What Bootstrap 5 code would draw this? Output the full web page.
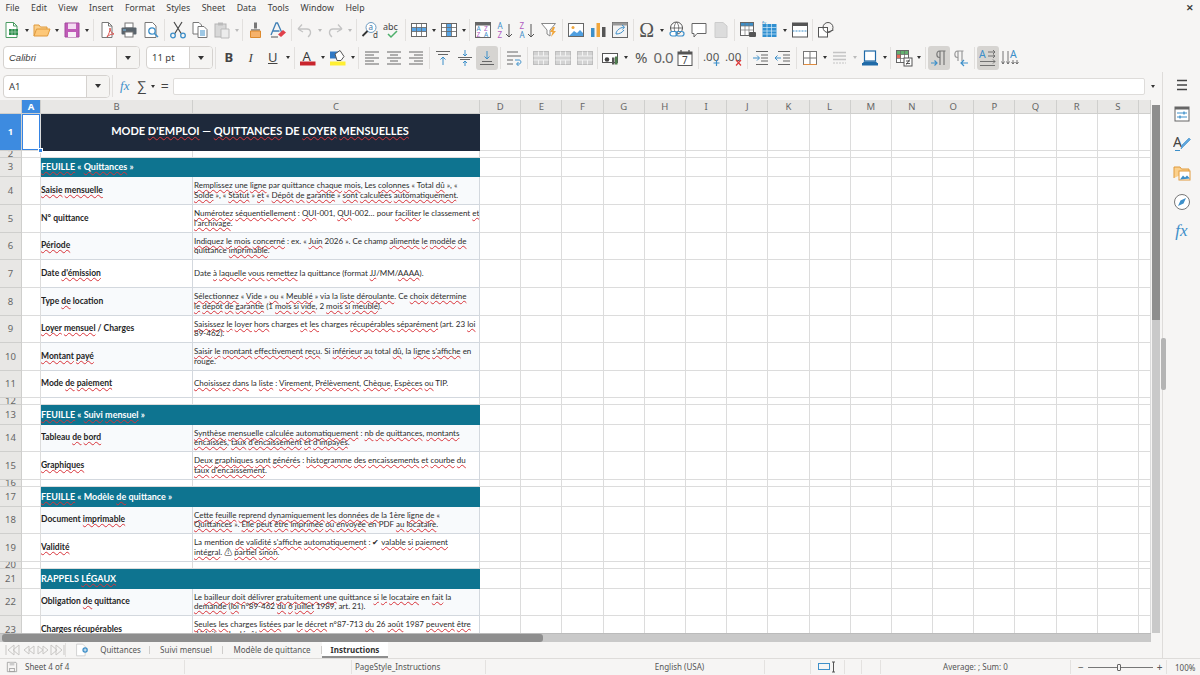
<!DOCTYPE html>
<html lang="fr">
<head>
    <meta charset="UTF-8">
    <title>Instructions - LibreOffice Calc</title>
    <link href="https://cdn.jsdelivr.net/npm/bootstrap@5.3.0/dist/css/bootstrap.min.css" rel="stylesheet">
    <style>
        html, body { height: 100%; }
        body { background: #f6f5f4; color: #3d3d3d; font: 10px "Noto Sans", sans-serif; overflow: hidden; }
        .menu-bar { height: 17px; padding-left: 5.5px; gap: 11.5px; line-height: 17px; font-size: 8.8px; position: relative; }
        .win-close { position: absolute; right: 6px; top: 0; font-weight: 700; }
        .tool-row { padding-left: 1px; padding-bottom: 2px; align-items: center; }
        .row-a { height: 28px; }
        .row-b { height: 27px; }
        .tbtn { width: 22px; height: 24px; flex: none; display: flex; align-items: center; justify-content: center; color: #444; font-size: 13px; line-height: 1; }
        .tbtn.on { background: #d6d4d1; border-radius: 3px; }
        .tbtn svg, .side-ico svg { width: 18px; height: 18px; flex: none; }
        .glyph-omega { font: 20px "Liberation Serif", serif; color: #555; }
        .glyph-pct { font-size: 15px; color: #555; }
        .glyph-num { font-size: 15px; color: #666; letter-spacing: -.5px; }
        .glyph-ital { font-family: "Liberation Serif", serif; }
        .glyph-fx { width: 20px; color: #3d8fc9; font: italic 13px "Liberation Serif", serif; }
        .glyph-sum { width: 14px; font-size: 14px; }
        .glyph-eq { width: 16px; font-size: 14px; }
        .drop { width: 8px; height: 24px; flex: none; display: flex; align-items: center; justify-content: center; }
        .drop::after { content: ""; border: 2.5px solid transparent; border-top: 3px solid #333; border-bottom: 0; }
        .drop.off::after { border-top-color: #bbb; }
        .sep { width: 4.75px; height: 22px; flex: none; display: flex; justify-content: center; }
        .sep::after { content: ""; width: 1px; background: #e2e0de; }
        .combo { height: 23px; display: flex; flex: none; background: #fff; border: 1px solid #d5d2cf; border-radius: 4px; overflow: hidden; font-size: 9.5px; }
        .combo-val { flex: 1; padding: 0 5px; line-height: 21px; }
        .combo-btn { width: 23px; background: #f5f4f2; border-left: 1px solid #d5d2cf; display: flex; align-items: center; justify-content: center; }
        .combo-btn::after { content: ""; border: 3.5px solid transparent; border-top: 4px solid #333; border-bottom: 0; }
        .font-box { width: 137px; margin-left: 2px; font-style: italic; font-family: "Liberation Sans", sans-serif; }
        .size-box { width: 67px; margin-left: 6px; }
        .name-box { width: 107px; margin-left: 3px; }
        .work-wrap { min-height: 0; flex: 1 1 0; }
        .left-col { min-width: 0; }
        .form-bar { height: 28px; flex: none; align-items: center; }
        .form-input { height: 17px; width: 972px; flex: none; background: #fff; border: 1px solid #dedcda; border-radius: 2px; }
        .sheet-wrap { min-height: 0; flex: 1 1 0; }
        .sheet-area { background: #fff; }
        .sheet-tbl { table-layout: fixed; border-collapse: separate; border-spacing: 0; width: 1151px; font: 8px/9.3px Lato, "Noto Sans CJK SC", sans-serif; color: #2b2b2b; }
        .sheet-tbl col:nth-child(1) { width: 22px; }
        .sheet-tbl col:nth-child(2) { width: 19px; }
        .sheet-tbl col:nth-child(3) { width: 152px; }
        .sheet-tbl col:nth-child(4) { width: 287px; }
        .sheet-tbl col.col-std { width: 41.2px; }
        .sheet-tbl td, .sheet-tbl th { border-right: 1px solid #dcdcdc; border-bottom: 1px solid #dcdcdc; padding: 0; overflow: hidden; white-space: nowrap; }
        .sheet-tbl th { background: #e8e7e5; color: #666; font: 9.5px/6px "Noto Sans", sans-serif; text-align: center; border-color: #cfcfcd; }
        .sheet-tbl th.hot { background: #3d8be0; color: #fff; font-weight: 700; }
        .col-hdr { height: 14px; }
        .sheet-tbl .lab { font-weight: 700; font-size: 8.5px; color: #1f1f1f; border-color: #d3d8de; }
        .sheet-tbl .txt { padding-left: 1px; border-color: #d3d8de; }
        .sheet-tbl .soft { background: #f8fafc; }
        .sheet-tbl .ttl { background: #1e293b; color: #fff; font-weight: 700; font-size: 11px; text-align: center; border-color: #1e293b; padding-bottom: 2px; }
        .sheet-tbl .sec { background: #0e7490; color: #fff; font-weight: 700; font-size: 9px; border-color: #0e7490; }
        .sheet-tbl .cur { position: relative; box-shadow: inset 0 0 0 1px #3584e4; overflow: visible; }
        .cur-dot { position: absolute; right: -3px; bottom: -3px; width: 5px; height: 5px; background: #3584e4; border: 1px solid #fff; }
        .sp { text-decoration: underline wavy #d8333a; text-decoration-thickness: 1px; text-underline-offset: 1px; text-decoration-skip-ink: none; }
        .vscroll { width: 11px; flex: none; background: #f6f5f4; padding: 5px 2px 0 1px; }
        .vscroll-in { height: 100%; background: #c9c9c9; }
        .vthumb { height: 215px; background: #8e8e8e; }
        .hscroll { height: 9px; flex: none; background: #c9c9c9; margin-right: 11px; border-top: 1px solid #bbb; }
        .hthumb { width: 541px; height: 100%; margin-left: 2px; background: #8e8e8e; border-radius: 3px; }
        .tab-row { height: 16px; flex: none; align-items: center; color: #555; font-size: 8px; }
        .tab-nav { width: 66px; padding-left: 5px; border-right: 1px solid #e2e0de; height: 14px; flex: none; }
        .tab-add { width: 20px; height: 16px; margin-left: 6px; }
        .tab-add svg { width: 14px; height: 14px; }
        .sheet-tab { height: 16px; line-height: 15px; flex: none; text-align: center; }
        .tab-1 { width: 57px; }
        .tab-2 { width: 72px; }
        .tab-3 { width: 98px; }
        .tab-line { width: 1px; height: 8px; background: #cfcdcb; flex: none; }
        .tab-on { width: 66px; font-weight: 700; color: #333; background: #fff; border-bottom: 2px solid #8f8f8f; }
        .side-bar { width: 38px; flex: none; border-left: 1px solid #dedcda; position: relative; }
        .side-ico { height: 29.2px; display: flex; align-items: center; justify-content: center; }
        .side-ico:first-child { margin-top: -1.5px; }
        .side-fx { color: #3d8fc9; font: italic 17px "Liberation Serif", serif; }
        .side-grip { position: absolute; left: -2px; top: 266px; width: 5px; height: 52px; background: #b4b4b4; border-radius: 2px; }
        .status-bar { height: 17px; flex: none; border-top: 1px solid #dedcda; align-items: center; font-size: 8px; color: #555; }
        .stat-cell { height: 14px; line-height: 14px; flex: none; border-right: 1px solid #e4e2e0; overflow: hidden; white-space: nowrap; }
        .stat-save { width: 185px; padding-left: 3px; }
        .stat-save svg { width: 18px; height: 14px; }
        .stat-gap { width: 167px; }
        .stat-page { width: 134px; padding-left: 3px; }
        .stat-lang { width: 279px; padding-left: 109px; }
        .stat-w46 { width: 46px; }
        .stat-sel { width: 34px; padding-left: 7px; }
        .stat-w17 { width: 17px; }
        .stat-w19 { width: 19px; }
        .stat-sum { width: 190px; }
        .stat-zoom { width: 96px; padding-left: 7px; font-size: 10px; }
        .zoom-track { width: 65px; height: 1px; background: #777; position: relative; }
        .zoom-knob { position: absolute; left: 29px; top: -3px; width: 4px; height: 7px; border: 1px solid #666; background: #f6f5f4; border-radius: 1px; }
    </style>
</head>
<body>
<svg width="0" height="0" class="position-absolute">
    <defs>
        <symbol id="i-new" viewBox="0 0 18 18"><path d="M3 1.5h7.5L14 5v11.5H3z" fill="#fff" stroke="#4b9b63"/><path d="M10.5 1.5V5H14" fill="none" stroke="#4b9b63"/><rect x="6" y="8" width="9" height="6" fill="#2f8f4e"/><path d="M6 11h9M9 8v6M12 8v6" stroke="#bfe3cb" stroke-width=".6"/></symbol>
        <symbol id="i-open" viewBox="0 0 18 18"><path d="M1 15V4h5l1.5 2H14v2" fill="#fbd08c" stroke="#e09a3d"/><path d="M1 15l2.5-7H17l-2.500 7z" fill="#fdc879" stroke="#e09a3d"/></symbol>
        <symbol id="i-save" viewBox="0 0 18 18"><path d="M2 2h14v14H2z" fill="#c05bb8" stroke="#a44a9e"/><rect x="5" y="2.500" width="8" height="5.500" fill="#f4dcf2"/><rect x="5" y="11" width="8" height="5" fill="#f8eef7"/></symbol>
        <symbol id="i-pdf" viewBox="0 0 18 18"><path d="M4 1.500h6.500L14 5v11.500H4z" fill="#fff" stroke="#777"/><path d="M10.500 1.500V5H14" fill="none" stroke="#777"/><path d="M9 16c2-3 3-6 3-9 0 3 1.500 5 4 6-3 0-5 1-7 3z" fill="none" stroke="#d9534f"/></symbol>
        <symbol id="i-print" viewBox="0 0 18 18"><rect x="5" y="2" width="8" height="5" fill="#fff" stroke="#777"/><rect x="1.500" y="6.500" width="15" height="7" rx="1" fill="#59636b"/><rect x="5" y="11" width="8" height="5" fill="#fff" stroke="#777"/><path d="M3 9h3" stroke="#7cc1ee"/></symbol>
        <symbol id="i-prev" viewBox="0 0 18 18"><path d="M3 1.500h7.500L14 5v11.500H3z" fill="#fff" stroke="#777"/><circle cx="10" cy="10" r="3.200" fill="#fff" stroke="#3d8fc9" stroke-width="1.300"/><path d="M12.500 12.500l3.500 3.500" stroke="#3d8fc9" stroke-width="1.500"/></symbol>
        <symbol id="i-cut" viewBox="0 0 18 18"><path d="M5 1l7.500 12M13 1L5.500 13" stroke="#4a4a4a" stroke-width="1.200"/><circle cx="4" cy="14.500" r="2.300" fill="none" stroke="#3d8fc9" stroke-width="1.300"/><circle cx="14" cy="14.500" r="2.300" fill="none" stroke="#3d8fc9" stroke-width="1.300"/></symbol>
        <symbol id="i-copy" viewBox="0 0 18 18"><path d="M2 1.500h6l2.500 2.500v9H2z" fill="#fff" stroke="#777"/><path d="M7 5.500h6l3 3v8H7z" fill="#fff" stroke="#777"/><path d="M9 10h5M9 12h5M9 14h5" stroke="#3d8fc9"/></symbol>
        <symbol id="i-paste" viewBox="0 0 18 18"><rect x="2" y="3" width="11" height="13" fill="#d8d8d8" stroke="#b5b5b5"/><rect x="5" y="1.500" width="5" height="3" fill="#bbb"/><path d="M8 8h8v9H8z" fill="#ececec" stroke="#bbb"/></symbol>
        <symbol id="i-clone" viewBox="0 0 18 18"><path d="M7 1.500h3v6H7z" fill="#777"/><path d="M4 8h9v2H4z" fill="#9a9a9a"/><path d="M3.500 10h10v6.500h-10z" fill="#f6b26b" stroke="#dd8a2e"/></symbol>
        <symbol id="i-clear" viewBox="0 0 18 18"><path d="M2 14L7 2h1.500L13 12M4 10h6.500" fill="none" stroke="#3f7fb5" stroke-width="1.300"/><path d="M9 13.500l5-4.500 3 2.500-5 4.500z" fill="#e0404a"/><path d="M2 16h7" stroke="#555"/></symbol>
        <symbol id="i-undo" viewBox="0 0 18 18"><path d="M2 8l4-4.500M2 8l5 3M2.500 8H11c4 0 5 5 1 8" fill="none" stroke="#c4c4c4" stroke-width="1.300"/></symbol>
        <symbol id="i-redo" viewBox="0 0 18 18"><path d="M16 8l-4-4.500M16 8l-5 3M15.500 8H7c-4 0-5 5-1 8" fill="none" stroke="#c4c4c4" stroke-width="1.300"/></symbol>
        <symbol id="i-find" viewBox="0 0 18 18"><circle cx="10" cy="6.500" r="5" fill="#fff" stroke="#6d9bc1"/><path d="M6.500 10L1.500 15" stroke="#333" stroke-width="1.800"/><text x="7.500" y="9" font-size="8" fill="#3d78a8" font-family="Noto Sans">a</text><text x="12" y="17" font-size="8" fill="#444" font-family="Noto Sans">d</text></symbol>
        <symbol id="i-spell" viewBox="0 0 18 18"><text x="0" y="9" font-size="9" fill="#444" font-family="Noto Sans">abc</text><path d="M5 13l3 3 6-6" fill="none" stroke="#4caf6a" stroke-width="1.500"/></symbol>
        <symbol id="i-rows" viewBox="0 0 18 18"><rect x="1.500" y="2.500" width="15" height="13" fill="#fff" stroke="#666"/><rect x="2" y="6.500" width="14" height="4" fill="#58a5e6"/><path d="M1.500 6.500h15M1.500 10.500h15M6.500 2.500v13M11.500 2.500v13" stroke="#666" stroke-width=".8"/></symbol>
        <symbol id="i-cols" viewBox="0 0 18 18"><rect x="1.500" y="2.500" width="15" height="13" fill="#fff" stroke="#666"/><rect x="6.500" y="3" width="5" height="12" fill="#58a5e6"/><path d="M1.500 6.500h15M1.500 10.500h15M6.500 2.500v13M11.500 2.500v13" stroke="#666" stroke-width=".8"/></symbol>
        <symbol id="i-sort" viewBox="0 0 18 18"><rect x="1.500" y="1.500" width="15" height="15" fill="#fff" stroke="#666"/><rect x="1.500" y="1.500" width="15" height="3" fill="#666"/><text x="2.500" y="10" font-size="6.500" fill="#3d8fc9" font-family="Noto Sans">A</text><text x="2.500" y="16" font-size="6.500" fill="#b05cc0" font-family="Noto Sans">Z</text><text x="10" y="10" font-size="6.500" fill="#b05cc0" font-family="Noto Sans">Z</text><text x="10" y="16" font-size="6.500" fill="#3d8fc9" font-family="Noto Sans">A</text></symbol>
        <symbol id="i-asc" viewBox="0 0 18 18"><text x="1.500" y="8" font-size="8" fill="#3d8fc9" font-family="Noto Sans">A</text><text x="1.500" y="16.500" font-size="8" fill="#b05cc0" font-family="Noto Sans">Z</text><path d="M13 3v13M10 13l3 3 3-3" fill="none" stroke="#555"/></symbol>
        <symbol id="i-desc" viewBox="0 0 18 18"><text x="1.500" y="8" font-size="8" fill="#b05cc0" font-family="Noto Sans">Z</text><text x="1.500" y="16.500" font-size="8" fill="#3d8fc9" font-family="Noto Sans">A</text><path d="M13 3v13M10 13l3 3 3-3" fill="none" stroke="#555"/></symbol>
        <symbol id="i-filter" viewBox="0 0 18 18"><path d="M1.500 2.500h14L10 9v6L7 13V9z" fill="#fff" stroke="#888"/><path d="M13 6l-3 5h2.500L11 16l5-6h-2.500L15 6z" fill="#f0a63c"/></symbol>
        <symbol id="i-image" viewBox="0 0 18 18"><rect x="1.500" y="2.500" width="15" height="13" fill="#fff" stroke="#666"/><circle cx="6" cy="6.500" r="1.500" fill="#f0a63c"/><path d="M2 15l5-5 3 2 3-3 3 3v3z" fill="#4f9fe0"/></symbol>
        <symbol id="i-chart" viewBox="0 0 18 18"><rect x="2" y="7" width="3.500" height="9" fill="#3d8fc9"/><rect x="7.500" y="2" width="3.500" height="14" fill="#f0a63c"/><rect x="13" y="6" width="3.500" height="10" fill="#555"/></symbol>
        <symbol id="i-pivot" viewBox="0 0 18 18"><rect x="1.500" y="1.500" width="15" height="15" fill="#f3f3f3" stroke="#666"/><rect x="1.500" y="1.500" width="15" height="3" fill="#999"/><path d="M5 13c0-3 3-6 8-7M11 4l2.500 2-2 2.500M5 13c3 0 6-1 8-4" fill="none" stroke="#3d8fc9"/></symbol>
        <symbol id="i-link" viewBox="0 0 18 18"><circle cx="8.500" cy="7" r="6" fill="#fff" stroke="#555"/><path d="M2.500 7h12M8.500 1c-3 3-3 9 0 12M8.500 1c3 3 3 9 0 12" fill="none" stroke="#555" stroke-width=".8"/><rect x="2" y="10.500" width="7" height="4.500" rx="2.200" fill="#fff" stroke="#3d8fc9" stroke-width="1.200"/><rect x="8" y="10.500" width="8" height="4.500" rx="2.200" fill="none" stroke="#3d8fc9" stroke-width="1.200"/></symbol>
        <symbol id="i-note" viewBox="0 0 18 18"><path d="M2 2.500h14v10H7l-3 3.500v-3.500H2z" fill="#fff" stroke="#666"/></symbol>
        <symbol id="i-head" viewBox="0 0 18 18"><path d="M3 1.500h8L15 5v11.500H3z" fill="#dcdcdc" stroke="#ccc"/></symbol>
        <symbol id="i-add" viewBox="0 0 18 18"><path d="M2 1.500h8L13 4.500v12H2z" fill="#fff" stroke="#c9c9c9"/><circle cx="13" cy="9" r="3.500" fill="#3d8fc9"/><path d="M11 9h4M13 7v4" stroke="#fff"/></symbol>
        <symbol id="i-range" viewBox="0 0 18 18"><rect x="1.500" y="1.500" width="13" height="13" fill="#fff" stroke="#666"/><rect x="2" y="2" width="12" height="3" fill="#3d8fc9"/><path d="M1.500 5h13M1.500 9h13M6 2v12M10 2v12" stroke="#777" stroke-width=".7"/><rect x="10" y="11" width="7" height="5" rx="1" fill="#555"/></symbol>
        <symbol id="i-tbl" viewBox="0 0 18 18"><rect x="1.500" y="3" width="14" height="13" fill="#2f8fd0"/><path d="M1.500 6.500h14M1.500 10h14M1.500 13h14M6 3v13M10.500 3v13" stroke="#d7ecfa" stroke-width=".7"/><text x="1" y="3.500" font-size="5" fill="#3d8fc9" font-family="Noto Sans">fx</text></symbol>
        <symbol id="i-win" viewBox="0 0 18 18"><rect x="1.500" y="2" width="15" height="14" fill="#fff" stroke="#555"/><rect x="1.500" y="2" width="15" height="3" fill="#555"/><path d="M1.500 10h15" stroke="#3d8fc9" stroke-dasharray="2 1"/></symbol>
        <symbol id="i-shape" viewBox="0 0 18 18"><rect x="1.500" y="6.500" width="9" height="9.500" fill="#fff" stroke="#555"/><circle cx="11" cy="6.500" r="5" fill="none" stroke="#555"/><path d="M11 11l5.500-2" stroke="#555"/></symbol>
        <symbol id="i-colA" viewBox="0 0 18 18"><text x="3.500" y="11.500" font-size="13" fill="#3a3a3a" font-family="Noto Sans">A</text><rect x="1" y="12.500" width="15.500" height="4" fill="#c9252d"/></symbol>
        <symbol id="i-mark" viewBox="0 0 18 18"><rect x="1" y="2.500" width="8" height="7" fill="#2f78c4"/><path d="M6 5l5-3.500 4 6-3 4H8z" fill="#fff" stroke="#555"/><rect x="1" y="12.500" width="15.500" height="4" fill="#ffef33"/></symbol>
        <symbol id="i-al" viewBox="0 0 18 18"><path d="M2 3h14M2 6h9M2 9h14M2 12h9M2 15h14" stroke="#666"/></symbol>
        <symbol id="i-ac" viewBox="0 0 18 18"><path d="M2 3h14M5 6h8M2 9h14M5 12h8M2 15h14" stroke="#666"/></symbol>
        <symbol id="i-ar" viewBox="0 0 18 18"><path d="M2 3h14M7 6h9M2 9h14M7 12h9M2 15h14" stroke="#666"/></symbol>
        <symbol id="i-vt" viewBox="0 0 18 18"><path d="M2 2.500h14M4 5.500h10" stroke="#666"/><path d="M9 16V8M6.500 10.500L9 8l2.500 2.500" fill="none" stroke="#3d8fc9"/></symbol>
        <symbol id="i-vc" viewBox="0 0 18 18"><path d="M2 8.500h14M4 10.500h10" stroke="#666"/><path d="M9 1v6M7 5l2 2 2-2M9 17v-5M7 14l2-2 2 2" fill="none" stroke="#3d8fc9"/></symbol>
        <symbol id="i-vb" viewBox="0 0 18 18"><path d="M4 12.500h10M2 15.500h14" stroke="#666"/><path d="M9 2v8M6.500 7.500L9 10l2.500-2.500" fill="none" stroke="#3d8fc9"/></symbol>
        <symbol id="i-wrap" viewBox="0 0 18 18"><path d="M2 3h11M2 7h14M2 11h6M2 15h6" stroke="#666"/><path d="M10 11h4c2.500 0 2.500 4 0 4h-2M13.500 13l-2 2 2 2" fill="none" stroke="#3d8fc9"/></symbol>
        <symbol id="i-merge" viewBox="0 0 18 18"><rect x="1.500" y="2.500" width="15" height="13" fill="#d3d3d3" stroke="#bdbdbd"/><path d="M1.500 7h15M1.500 11h15M6.500 2.500V7M11.500 2.500V7M6.500 11v4.500M11.500 11v4.500" stroke="#f2f2f2"/></symbol>
        <symbol id="i-cur" viewBox="0 0 18 18"><rect x=".5" y="4.500" width="15" height="9" fill="#fff" stroke="#555"/><circle cx="5" cy="10.500" r="2.300" fill="#444"/><rect x="10" y="8.500" width="2.500" height="7" fill="#555"/><rect x="13" y="7.500" width="2.500" height="8" fill="#4f7f4f"/></symbol>
        <symbol id="i-date" viewBox="0 0 18 18"><rect x="2" y="3" width="14" height="13.500" fill="#fff" stroke="#555"/><rect x="2" y="3" width="14" height="2.500" fill="#555"/><path d="M5 1v3M13 1v3" stroke="#555" stroke-width="1.300"/><text x="6" y="14.500" font-size="10" fill="#444" font-family="Noto Sans">7</text></symbol>
        <symbol id="i-decp" viewBox="0 0 18 18"><text x="0" y="12" font-size="11.500" fill="#555" font-family="Noto Sans">.00</text><path d="M13.500 11v6M10.500 14h6" stroke="#3d8fc9" stroke-width="1.200"/></symbol>
        <symbol id="i-decm" viewBox="0 0 18 18"><text x="0" y="12" font-size="11.500" fill="#555" font-family="Noto Sans">.00</text><path d="M11 11l5 5.500M16 11l-5 5.500" stroke="#dd3b3b" stroke-width="1.200"/></symbol>
        <symbol id="i-ind" viewBox="0 0 18 18"><path d="M4 2.500h12M9 6h7M9 9h7M9 12h7M4 15.500h12" stroke="#666"/><path d="M1 9h6M5 6.500L7.500 9 5 11.500" fill="none" stroke="#3d8fc9"/></symbol>
        <symbol id="i-out" viewBox="0 0 18 18"><path d="M4 2.500h12M9 6h7M9 9h7M9 12h7M4 15.500h12" stroke="#666"/><path d="M7 9H1M3.500 6.500L1 9l2.500 2.500" fill="none" stroke="#3d8fc9"/></symbol>
        <symbol id="i-bord" viewBox="0 0 18 18"><rect x="2.500" y="2.500" width="13" height="13" fill="#fff" stroke="#777"/><path d="M9 2.500v13M2.500 9h13" stroke="#777"/><path d="M2.500 15.500h13" stroke="#e08b3d"/></symbol>
        <symbol id="i-bstyle" viewBox="0 0 18 18"><path d="M2 3.500h13M2 7h13M2 10.500h13" stroke="#c4c4c4" stroke-width="1.300"/><path d="M2 14h13" stroke="#c4c4c4" stroke-dasharray="2 1"/></symbol>
        <symbol id="i-bcol" viewBox="0 0 18 18"><rect x="3.500" y="2" width="11" height="10" fill="#fff" stroke="#1f6aa8" stroke-width="1.200"/><path d="M1 15l2-2.500h12l2 2.500z" fill="#1f6aa8"/><rect x="1" y="14" width="16" height="2.500" fill="#1f6aa8"/></symbol>
        <symbol id="i-cond" viewBox="0 0 18 18"><rect x="1.500" y="1.500" width="12" height="12" fill="#fff" stroke="#666"/><rect x="2" y="2" width="11" height="3.500" fill="#63b06f"/><rect x="2" y="5.500" width="4" height="3.500" fill="#e56b5b"/><path d="M1.500 5.500h12M1.500 9.500h12M5.500 2v11M9.500 2v11" stroke="#666" stroke-width=".7"/><rect x="9" y="9" width="8" height="8" fill="#fff" stroke="#555"/><path d="M11 12h4M11 14.500h4M14.500 10.500l-3 5" stroke="#333" stroke-width=".8"/></symbol>
        <symbol id="i-ltr" viewBox="0 0 18 18"><path d="M10 16V2M14 16V2M15.500 2H9.500C6 2 6 8.500 9.500 8.500H10" fill="none" stroke="#777" stroke-width="1.200"/><path d="M1 14h6M4.500 11.500L7 14l-2.500 2.500" fill="none" stroke="#3d8fc9" stroke-width="1.200"/></symbol>
        <symbol id="i-rtl" viewBox="0 0 18 18"><path d="M6 12V2M10 12V2M11.500 2H5.500C2 2 2 8.500 5.500 8.500H6" fill="none" stroke="#999" stroke-width="1.200"/><path d="M9 14h7M12 11l-3 3 3 3" fill="none" stroke="#3d8fc9" stroke-width="1.200"/></symbol>
        <symbol id="i-hz" viewBox="0 0 18 18"><text x="0" y="9" font-size="10.500" fill="#3d8fc9" font-family="Noto Sans">A</text><path d="M9 3h7M14 1l2 2-2 2M9 7h7M14 5.500L16 7l-2 2M1 12.500h15M14 10.500l2 2-2 2M1 16.500h15" fill="none" stroke="#666" stroke-width=".9"/></symbol>
        <symbol id="i-vt2" viewBox="0 0 18 18"><text x="9" y="9" font-size="10.500" fill="#3d8fc9" font-family="Noto Sans">A</text><path d="M2 2v13M.5 12.500L2 15l1.500-2.500M7 2v13M5.500 12.500L7 15l1.500-2.500M12 11v4M10.500 13L12 15l1.500-2M16 11v4M14.500 13L16 15l1.500-2" fill="none" stroke="#666" stroke-width=".9"/></symbol>
        <symbol id="i-disk" viewBox="0 0 18 18"><path d="M3 3h11l1 1v11H3z" fill="none" stroke="#999"/><rect x="6" y="3" width="6" height="4" fill="#ccc"/><rect x="6" y="11" width="6" height="4" fill="none" stroke="#999"/></symbol>
        <symbol id="i-props" viewBox="0 0 18 18"><rect x="2" y="2" width="14" height="14" fill="#fff" stroke="#666"/><rect x="2" y="2" width="14" height="2.500" fill="#666"/><path d="M4 8h10M4 12h10" stroke="#3d8fc9"/><path d="M11 6.500v3M7 10.500v3" stroke="#3d8fc9" stroke-width="1.300"/></symbol>
        <symbol id="i-style" viewBox="0 0 18 18"><text x="0" y="13" font-size="14" fill="#444" font-family="Noto Sans">A</text><path d="M8 15l1-4 7-7 1.500 1.500-7 7z" fill="#5fa6de" stroke="#3d8fc9" stroke-width=".6"/><path d="M2 16.500h5" stroke="#3d8fc9"/></symbol>
        <symbol id="i-gall" viewBox="0 0 18 18"><path d="M1 14V3h6l1.500 2H16v2" fill="#fbd08c" stroke="#e09a3d"/><rect x="6" y="7" width="11" height="9" fill="#fff" stroke="#e09a3d"/><path d="M7 15.500l3-4 2 2 2-2 3 3z" fill="#3d8fc9"/></symbol>
        <symbol id="i-nav" viewBox="0 0 18 18"><circle cx="9" cy="9" r="7.500" fill="#fff" stroke="#777"/><path d="M13 5l-2.500 5.500L5 13l2.500-5.500z" fill="#3d8fc9"/></symbol>
    </defs>
</svg>

<div class="d-flex flex-column vh-100">
    <div class="menu-bar d-flex flex-shrink-0">
        <span>File</span><span>Edit</span><span>View</span><span>Insert</span><span>Format</span><span>Styles</span><span>Sheet</span><span>Data</span><span>Tools</span><span>Window</span><span>Help</span>
        <span class="win-close">✕</span>
    </div>

    <div class="tool-row row-a d-flex flex-shrink-0">
        <div class="tbtn"><svg><use href="#i-new"/></svg></div><div class="drop"></div>
        <div class="tbtn"><svg><use href="#i-open"/></svg></div><div class="drop"></div>
        <div class="tbtn"><svg><use href="#i-save"/></svg></div><div class="drop"></div><div class="sep"></div>
        <div class="tbtn"><svg><use href="#i-pdf"/></svg></div><div class="tbtn"><svg><use href="#i-print"/></svg></div><div class="tbtn"><svg><use href="#i-prev"/></svg></div><div class="sep"></div>
        <div class="tbtn"><svg><use href="#i-cut"/></svg></div><div class="tbtn"><svg><use href="#i-copy"/></svg></div><div class="tbtn"><svg><use href="#i-paste"/></svg></div><div class="drop off"></div><div class="sep"></div>
        <div class="tbtn"><svg><use href="#i-clone"/></svg></div><div class="tbtn"><svg><use href="#i-clear"/></svg></div><div class="sep"></div>
        <div class="tbtn"><svg><use href="#i-undo"/></svg></div><div class="drop off"></div><div class="tbtn"><svg><use href="#i-redo"/></svg></div><div class="drop off"></div><div class="sep"></div>
        <div class="tbtn"><svg><use href="#i-find"/></svg></div><div class="tbtn"><svg><use href="#i-spell"/></svg></div><div class="sep"></div>
        <div class="tbtn"><svg><use href="#i-rows"/></svg></div><div class="drop"></div><div class="tbtn"><svg><use href="#i-cols"/></svg></div><div class="drop"></div><div class="sep"></div>
        <div class="tbtn"><svg><use href="#i-sort"/></svg></div><div class="tbtn"><svg><use href="#i-asc"/></svg></div><div class="tbtn"><svg><use href="#i-desc"/></svg></div><div class="tbtn"><svg><use href="#i-filter"/></svg></div><div class="sep"></div>
        <div class="tbtn"><svg><use href="#i-image"/></svg></div><div class="tbtn"><svg><use href="#i-chart"/></svg></div><div class="tbtn"><svg><use href="#i-pivot"/></svg></div><div class="sep"></div>
        <div class="tbtn glyph-omega">Ω</div><div class="drop"></div><div class="tbtn"><svg><use href="#i-link"/></svg></div><div class="tbtn"><svg><use href="#i-note"/></svg></div><div class="tbtn"><svg><use href="#i-head"/></svg></div><div class="sep"></div>
        <div class="tbtn"><svg><use href="#i-range"/></svg></div><div class="tbtn"><svg><use href="#i-tbl"/></svg></div><div class="drop"></div><div class="tbtn"><svg><use href="#i-win"/></svg></div><div class="sep"></div>
        <div class="tbtn"><svg><use href="#i-shape"/></svg></div>
    </div>

    <div class="tool-row row-b d-flex flex-shrink-0">
        <div class="combo font-box"><div class="combo-val">Calibri</div><div class="combo-btn"></div></div>
        <div class="combo size-box"><div class="combo-val">11 pt</div><div class="combo-btn"></div></div>
        <div class="sep"></div>
        <div class="tbtn fw-bold">B</div><div class="tbtn fst-italic glyph-ital">I</div><div class="tbtn text-decoration-underline">U</div><div class="drop"></div><div class="sep"></div>
        <div class="tbtn"><svg><use href="#i-colA"/></svg></div><div class="drop"></div><div class="tbtn"><svg><use href="#i-mark"/></svg></div><div class="drop"></div><div class="sep"></div>
        <div class="tbtn"><svg><use href="#i-al"/></svg></div><div class="tbtn"><svg><use href="#i-ac"/></svg></div><div class="tbtn"><svg><use href="#i-ar"/></svg></div><div class="sep"></div>
        <div class="tbtn"><svg><use href="#i-vt"/></svg></div><div class="tbtn"><svg><use href="#i-vc"/></svg></div><div class="tbtn on"><svg><use href="#i-vb"/></svg></div><div class="sep"></div>
        <div class="tbtn"><svg><use href="#i-wrap"/></svg></div><div class="sep"></div>
        <div class="tbtn"><svg><use href="#i-merge"/></svg></div><div class="tbtn"><svg><use href="#i-merge"/></svg></div><div class="tbtn"><svg><use href="#i-merge"/></svg></div><div class="sep"></div>
        <div class="tbtn"><svg><use href="#i-cur"/></svg></div><div class="drop"></div><div class="tbtn glyph-pct">%</div><div class="tbtn glyph-num">0.0</div><div class="tbtn"><svg><use href="#i-date"/></svg></div><div class="sep"></div>
        <div class="tbtn"><svg><use href="#i-decp"/></svg></div><div class="tbtn"><svg><use href="#i-decm"/></svg></div><div class="sep"></div>
        <div class="tbtn"><svg><use href="#i-ind"/></svg></div><div class="tbtn"><svg><use href="#i-out"/></svg></div><div class="sep"></div>
        <div class="tbtn"><svg><use href="#i-bord"/></svg></div><div class="drop"></div><div class="tbtn"><svg><use href="#i-bstyle"/></svg></div><div class="drop off"></div><div class="tbtn"><svg><use href="#i-bcol"/></svg></div><div class="drop"></div><div class="sep"></div>
        <div class="tbtn"><svg><use href="#i-cond"/></svg></div><div class="drop"></div><div class="sep"></div>
        <div class="tbtn on"><svg><use href="#i-ltr"/></svg></div><div class="tbtn"><svg><use href="#i-rtl"/></svg></div><div class="sep"></div>
        <div class="tbtn on"><svg><use href="#i-hz"/></svg></div><div class="tbtn"><svg><use href="#i-vt2"/></svg></div>
    </div>

    <div class="work-wrap d-flex">
        <div class="left-col d-flex flex-column flex-grow-1">
            <div class="form-bar d-flex">
                <div class="combo name-box"><div class="combo-val">A1</div><div class="combo-btn"></div></div>
                <div class="sep"></div>
                <div class="tbtn glyph-fx">fx</div>
                <div class="tbtn glyph-sum">∑</div><div class="drop"></div>
                <div class="tbtn glyph-eq">=</div>
                <div class="form-input"></div>
                <div class="drop ms-1"></div>
            </div>
            <div class="sheet-wrap d-flex">
                <div class="sheet-area flex-grow-1 overflow-hidden">
                    <table class="sheet-tbl" id="sheet"></table>
                </div>
                <div class="vscroll"><div class="vscroll-in"><div class="vthumb"></div></div></div>
            </div>
            <div class="hscroll"><div class="hthumb"></div></div>
            <div class="tab-row d-flex">
                <div class="tab-nav d-flex align-items-center">
                    <svg width="60" height="12" viewBox="0 0 60 12" fill="none" stroke="#c9c7c5"><path d="M1 1v10M9 1L3 6l6 5zM14 1L8 6l6 5z"/><path d="M24 2l-5 4 5 4zM29 2l-5 4 5 4z"/><path d="M33 2l5 4-5 4zM38 2l5 4-5 4z"/><path d="M46 1l6 5-6 5zM51 1l6 5-6 5zM59 1v10"/></svg>
                </div>
                <div class="tbtn tab-add"><svg><use href="#i-add"/></svg></div>
                <div class="sheet-tab tab-1">Quittances</div><div class="tab-line"></div>
                <div class="sheet-tab tab-2">Suivi mensuel</div><div class="tab-line"></div>
                <div class="sheet-tab tab-3">Modèle de quittance</div><div class="tab-line"></div>
                <div class="sheet-tab tab-on">Instructions</div>
            </div>
        </div>
        <div class="side-bar">
            <div class="side-ico"><svg viewBox="0 0 18 18"><path d="M4 4.500h10M4 9h10M4 13.500h10" stroke="#444" stroke-width="1.500"/></svg></div>
            <div class="side-ico"><svg><use href="#i-props"/></svg></div>
            <div class="side-ico"><svg><use href="#i-style"/></svg></div>
            <div class="side-ico"><svg><use href="#i-gall"/></svg></div>
            <div class="side-ico"><svg><use href="#i-nav"/></svg></div>
            <div class="side-ico side-fx">fx</div>
            <div class="side-grip"></div>
        </div>
    </div>

    <div class="status-bar d-flex">
        <div class="stat-cell stat-save d-flex align-items-center"><svg><use href="#i-disk"/></svg><span class="ms-1">Sheet 4 of 4</span></div>
        <div class="stat-cell stat-gap"></div>
        <div class="stat-cell stat-page">PageStyle_Instructions</div>
        <div class="stat-cell stat-lang text-center">English (USA)</div>
        <div class="stat-cell stat-w46"></div>
        <div class="stat-cell stat-sel d-flex align-items-center"><svg width="18" height="12" viewBox="0 0 18 12"><rect x=".5" y="2.500" width="11" height="6" fill="none" stroke="#3d8fc9"/><path d="M14 1h3M15.500 1v10M14 11h3" stroke="#555"/></svg></div>
        <div class="stat-cell stat-w17"></div>
        <div class="stat-cell stat-w19"></div>
        <div class="stat-cell stat-sum text-center">Average: ; Sum: 0</div>
        <div class="stat-cell stat-zoom d-flex align-items-center gap-1"><span>−</span><div class="zoom-track"><div class="zoom-knob"></div></div><span>+</span></div>
        <div class="ms-1 ps-1">100%</div>
    </div>
</div>

<script>
    // [word] = spell-check squiggle
    const rows = [
        [37, 'ttl', "MODE [D'EMPLOI] — [QUITTANCES] DE [LOYER] [MENSUELLES]"],
        [7],
        [19, 'sec', '[FEUILLE] « [Quittances] »'],
        [28, 'soft', '[Saisie] [mensuelle]', '[Remplissez] [une] [ligne] par quittance [chaque] [mois], Les [colonnes] « Total [dû] », «<br>[Solde] », « [Statut] » [et] « [Dépôt] [de] [garantie] » [sont] [calculées] [automatiquement].'],
        [28, '', 'N° quittance', '[Numérotez] [séquentiellement] : [QUI]-001, [QUI]-002… pour [faciliter] le classement [et]<br>[l\'archivage].'],
        [27, 'soft', '[Période]', '[Indiquez] [le] [mois] [concerné] : ex. « [Juin] 2026 ». Ce champ [alimente] [le] [modèle] [de]<br>quittance [imprimable].'],
        [28, '', 'Date [d\'émission]', 'Date [à] [laquelle] [vous] [remettez] la quittance (format [JJ]/MM/[AAAA]).'],
        [28, 'soft', 'Type [de] location', '[Sélectionnez] « [Vide] » [ou] « [Meublé] » via la [liste] [déroulante]. Ce [choix] [détermine]<br>[le] [dépôt] [de] [garantie] (1 [mois] [si] [vide], 2 [mois] [si] [meublé]).'],
        [27, '', '[Loyer] [mensuel] / Charges', '[Saisissez] [le] [loyer] [hors] charges [et] [les] charges [récupérables] [séparément] (art. 23 [loi]<br>89-462).'],
        [28, 'soft', '[Montant] [payé]', '[Saisir] [le] [montant] [effectivement] [reçu]. Si [inférieur] [au] total [dû], la [ligne] [s\'affiche] en<br>rouge.'],
        [27, '', 'Mode [de] [paiement]', '[Choisissez] [dans] la [liste] : [Virement], [Prélèvement], [Chèque], [Espèces] [ou] TIP.'],
        [7],
        [20, 'sec', '[FEUILLE] « [Suivi] [mensuel] »'],
        [27, 'soft', 'Tableau [de] [bord]', '[Synthèse] [mensuelle] [calculée] [automatiquement] : [nb] [de] [quittances], [montants]<br>[encaissés], [taux] [d\'encaissement] [et] [d\'impayés].'],
        [28, '', '[Graphiques]', '[Deux] [graphiques] [sont] [générés] : [histogramme] [des] [encaissements] [et] [courbe] [du]<br>[taux] [d\'encaissement].'],
        [7],
        [20, 'sec', '[FEUILLE] « Modèle [de] quittance »'],
        [27, 'soft', 'Document [imprimable]', '[Cette] [feuille] [reprend] [dynamiquement] [les] [données] [de] la 1ère [ligne] [de] «<br>[Quittances] ». [Elle] [peut] [être] [imprimée] [ou] [envoyée] en PDF [au] [locataire].'],
        [28, '', '[Validité]', 'La mention [de] [validité] [s\'affiche] [automatiquement] : ✔ [valable] [si] [paiement]<br>[intégral]. ⚠ [partiel] [sinon].'],
        [7],
        [20, 'sec', 'RAPPELS [LÉGAUX]'],
        [27, 'soft', 'Obligation [de] quittance', 'Le [bailleur] [doit] [délivrer] [gratuitement] [une] quittance [si] [le] [locataire] en [fait] la<br>[demande] ([loi] n°89-462 [du] [6] [juillet] 1989, art. 21).'],
        [28, '', 'Charges [récupérables]', '[Seules] [les] charges [listées] par [le] [décret] n°87-713 [du] 26 [août] 1987 [peuvent] [être]<br>[déduites] [du] [dépôt].']
    ];
    const sq = s => s.replace(/\[([^\]]+)\]/g, '<span class="sp">$1</span>');
    const letters = 'DEFGHIJKLMNOPQRS'.split('');
    const blanks = '<td></td>'.repeat(17);

    let html = '<colgroup><col><col><col><col>' + letters.map(() => '<col class="col-std">').join('') + '<col></colgroup>';
    html += '<tr class="col-hdr"><th></th><th class="hot">A</th><th>B</th><th>C</th>'
        + letters.map(l => '<th>' + l + '</th>').join('') + '<th></th></tr>';
    rows.forEach((r, i) => {
        const n = i + 1;
        const aCell = n === 1 ? '<td class="cur"><div class="cur-dot"></div></td>' : '<td></td>';
        let mid;
        if (r[1] === 'ttl' || r[1] === 'sec') mid = '<td colspan="2" class="' + r[1] + '">' + sq(r[2]) + '</td>';
        else if (r.length === 1) mid = '<td></td><td></td>';
        else mid = '<td class="lab ' + r[1] + '">' + sq(r[2]) + '</td><td class="txt ' + r[1] + '">' + sq(r[3]) + '</td>';
        html += '<tr style="height:' + r[0] + 'px"><th class="' + (n === 1 ? 'hot' : '') + '">' + n + '</th>' + aCell + mid + blanks + '</tr>';
    });
    document.getElementById('sheet').innerHTML = html;
</script>
<script src="https://cdn.jsdelivr.net/npm/bootstrap@5.3.0/dist/js/bootstrap.bundle.min.js"></script>
</body>
</html>
